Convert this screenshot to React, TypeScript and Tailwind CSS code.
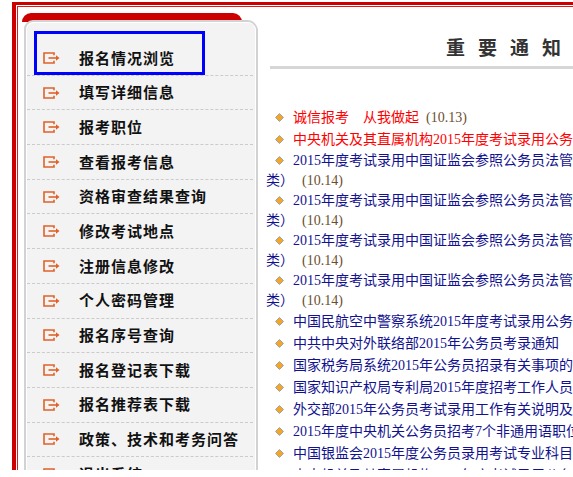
import React from "react";

type NewsItem = {
  text: string;
  red?: boolean;
  date?: string;
  wrap?: string;
};

const menu = [
  "报名情况浏览",
  "填写详细信息",
  "报考职位",
  "查看报考信息",
  "资格审查结果查询",
  "修改考试地点",
  "注册信息修改",
  "个人密码管理",
  "报名序号查询",
  "报名登记表下载",
  "报名推荐表下载",
  "政策、技术和考务问答",
  "退出系统",
];

const zjh = "2015年度考试录用中国证监会参照公务员法管理单位工作人员（专业";

const news: NewsItem[] = [
  { text: "诚信报考　从我做起", red: true, date: "(10.13)" },
  { text: "中央机关及其直属机构2015年度考试录用公务员公告", red: true },
  { text: zjh, wrap: "类）", date: "(10.14)" },
  { text: zjh, wrap: "类）", date: "(10.14)" },
  { text: zjh, wrap: "类）", date: "(10.14)" },
  { text: zjh, wrap: "类）", date: "(10.14)" },
  { text: "中国民航空中警察系统2015年度考试录用公务员公告" },
  { text: "中共中央对外联络部2015年公务员考录通知" },
  { text: "国家税务局系统2015年公务员招录有关事项的说明" },
  { text: "国家知识产权局专利局2015年度招考工作人员公告" },
  { text: "外交部2015年公务员考试录用工作有关说明及通知" },
  { text: "2015年度中央机关公务员招考7个非通用语职位外语考试" },
  { text: "中国银监会2015年度公务员录用考试专业科目考试" },
  { text: "中央机关及其直属机构2015年度考试录用公务员公告" },
];

function EnterIcon() {
  return (
    <svg width="17" height="12" viewBox="0 0 17 12" className="shrink-0">
      <path d="M11 3.2V1H1v10h10V8.8" fill="none" stroke="#e0622a" strokeWidth="1.6" />
      <path d="M5.5 6h8" stroke="#e0622a" strokeWidth="1.6" />
      <path d="M13 3.2L16.5 6 13 8.8z" fill="#e0622a" />
    </svg>
  );
}

function Diamond() {
  return (
    <svg width="9" height="9" viewBox="0 0 9 9" className="ml-[9px] shrink-0">
      <path d="M4.5 0.5L8.5 4.5 4.5 8.5 0.5 4.5z" fill="#f5a623" stroke="#8a94b0" strokeWidth="0.8" />
    </svg>
  );
}

export default function App() {
  return (
    <div className="w-[573px] h-[477px] overflow-hidden bg-white">
      <div className="h-[470px] overflow-hidden pt-[2px] pl-[12px]">
        <div className="w-[800px] h-[520px] border-t-[3px] border-l-[4px] border-[#cc0000]">
          <div className="mt-px ml-px h-full border-t border-l border-[#d42020] flex items-start pl-[4px] pt-[6px]">
            {/* left menu */}
            <div className="w-[236px] shrink-0">
              <div className="h-[9px] w-[220px] rounded-t-[9px] bg-[#cc0000]" />
              <div className="relative ml-[2px] -mt-[2px] w-[234px] h-[480px] rounded-t-[9px] rounded-tr-[11px] border-2 border-[#d2d2d2] bg-[#f3f3f3]">
                <div className="h-full rounded-t-[8px] border border-white pt-[18px]">
                  {menu.map((item) => (
                    <div
                      key={item}
                      className="flex h-[34.7px] items-center gap-[19px] border-b border-dashed border-[#cbcbcb] pl-[16px] mr-[2px] text-[15px] font-bold tracking-[1px] text-[#111]"
                      style={{ fontFamily: '"Noto Sans CJK SC", sans-serif' }}
                    >
                      <EnterIcon />
                      <span>{item}</span>
                    </div>
                  ))}
                </div>
                <div className="absolute left-[8px] top-[9px] w-[171px] h-[44px] border-[3px] border-[#0000ff]" />
              </div>
            </div>

            {/* right notices */}
            <div className="ml-[4px] w-[482px] shrink-0 whitespace-nowrap">
              <div
                className="mt-[22px] h-[24px] pl-[184px] text-[19px] leading-[24px] font-bold tracking-[13px] text-[#333]"
                style={{ fontFamily: '"Noto Sans CJK SC", sans-serif' }}
              >
                重要通知
              </div>
              <div className="mt-[7px] ml-[8px] h-[3px] bg-[#d6d6d6]" />
              <div
                className="mt-[37px] pl-[4px] text-[14px] text-[#12128f]"
                style={{ fontFamily: '"Liberation Serif", "Noto Sans CJK SC", serif' }}
              >
                {news.map((n, i) =>
                  n.wrap ? (
                    <div key={i}>
                      <div className="flex h-[20px] items-center">
                        <Diamond />
                        <span className="ml-[9px]">{n.text}</span>
                      </div>
                      <div className="flex h-[20px] items-center">
                        <span>{n.wrap}</span>
                        <span className="ml-[8px] text-[#6b4f2f]">{n.date}</span>
                      </div>
                    </div>
                  ) : (
                    <div key={i} className="flex h-[22px] items-center">
                      <Diamond />
                      <span className={`ml-[9px] ${n.red ? "text-[#ff0000]" : ""}`}>{n.text}</span>
                      {n.date ? <span className="ml-[7px] text-[#6b4f2f]">{n.date}</span> : null}
                    </div>
                  ),
                )}
              </div>
            </div>
          </div>
        </div>
      </div>
    </div>
  );
}
